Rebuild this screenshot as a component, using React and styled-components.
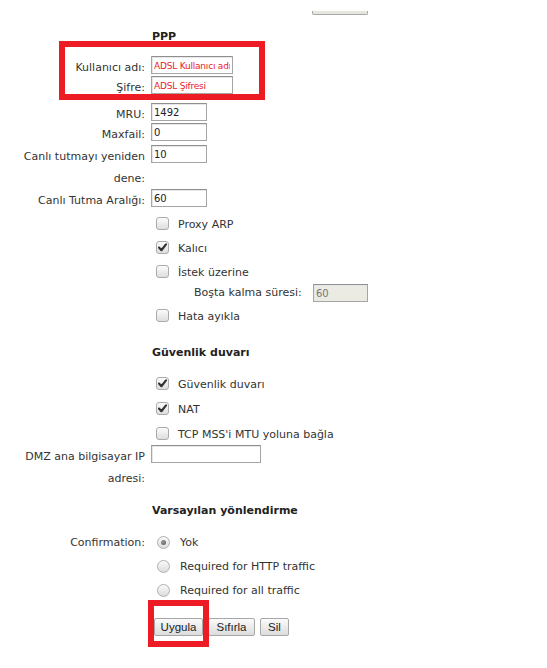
import React from "react";
import styled, { createGlobalStyle } from "styled-components";

const GlobalStyle = createGlobalStyle`
  body {
    margin: 0;
    font-family: "DejaVu Sans", Verdana, sans-serif;
    font-size: 11px;
    color: #333;
    background: #fff;
  }
`;

const Page = styled.div`
  position: relative;
  width: 547px;
  height: 668px;
  overflow: hidden;
  background: #fff;
`;

const TopButton = styled.div`
  margin: 11px 0 0 312px;
  width: 56px;
  height: 4px;
  box-sizing: border-box;
  background: #e6e6de;
  border: 1px solid #a8a8a8;
  border-top: none;
  border-radius: 0 0 2px 2px;
`;

const Heading = styled.div`
  margin: ${props => props.top}px 0 0 152px;
  font-weight: bold;
  line-height: 16px;
  color: #222;
`;

const Row = styled.div`
  display: grid;
  grid-template-columns: 145px auto;
  column-gap: 6px;
  align-items: start;
  height: ${props => (props.h ? `${props.h}px` : "auto")};
  margin-top: ${props => props.mt || 0}px;
`;

const Label = styled.div`
  text-align: right;
  line-height: ${props => props.lh || 22}px;
  padding-top: ${props => (props.lh ? 0 : 1)}px;
`;

const TextInput = styled.input`
  display: block;
  box-sizing: border-box;
  width: ${props => props.w}px;
  height: 18px;
  margin: ${props => props.mt || 0}px 0 0 ${props => props.ml || 0}px;
  padding: 0 2px;
  border: 1px solid #a5a5a5;
  border-top-color: #8f8f8f;
  box-shadow: inset 1px 1px 0 #e6e6e6;
  background: ${props => (props.disabled ? "#ebebe4" : "#fff")};
  font-family: "DejaVu Sans", Verdana, sans-serif;
  font-size: 10px;
  color: ${props => (props.disabled ? "#777" : "#222")};
  outline: none;

  &::placeholder {
    color: #e8202a;
    font-size: 9px;
    letter-spacing: -0.2px;
    opacity: 1;
  }
`;

const CheckRow = styled.div`
  display: flex;
  align-items: flex-start;
  height: ${props => props.h}px;
  margin-top: ${props => props.mt || 0}px;
  padding-left: 156px;
`;

const Box = styled.span`
  display: flex;
  align-items: center;
  justify-content: center;
  box-sizing: border-box;
  width: 13px;
  height: 13px;
  margin-top: 4px;
  border: 1px solid #ababab;
  border-radius: 3px;
  background: linear-gradient(#fbfbfb, #dedede);
`;

const OptionText = styled.span`
  margin-left: ${props => props.gap || 9}px;
  line-height: 24px;
`;

const SubRow = styled.div`
  display: flex;
  align-items: flex-start;
  height: ${props => props.h}px;
  padding-left: 194px;
`;

const SubLabel = styled.span`
  width: 119px;
  line-height: 20px;
`;

const RadioList = styled.div`
  display: flex;
  flex-direction: column;
  padding-left: 6px;
`;

const RadioRow = styled.div`
  display: flex;
  align-items: flex-start;
  height: 24px;
`;

const Radio = styled.span`
  display: flex;
  align-items: center;
  justify-content: center;
  box-sizing: border-box;
  width: 13px;
  height: 13px;
  margin-top: 5px;
  border: 1px solid #b0b0b0;
  border-radius: 50%;
  background: linear-gradient(#fafafa, #dcdcdc);

  &::after {
    content: "";
    display: ${props => (props.on ? "block" : "none")};
    width: 5px;
    height: 5px;
    border-radius: 50%;
    background: radial-gradient(circle at 40% 35%, #9a9a9a, #555);
  }
`;

const Buttons = styled.div`
  display: flex;
  gap: 5px;
  margin: 15px 0 0 154px;
`;

const Button = styled.button`
  box-sizing: border-box;
  width: ${props => props.w}px;
  height: 18px;
  padding: 0;
  border: 1px solid #a7a7a7;
  border-radius: 2px;
  background: linear-gradient(#fbfbfb, #dcdcdc);
  font-family: "Liberation Sans", Arial, sans-serif;
  font-size: 11.5px;
  color: #222;
`;

const Highlight = styled.div`
  position: absolute;
  left: ${props => props.x}px;
  top: ${props => props.y}px;
  width: ${props => props.w}px;
  height: ${props => props.h}px;
  box-sizing: border-box;
  border: 6px solid #ed1c24;
  pointer-events: none;
`;

const Check = () => (
  <svg width="9" height="9" viewBox="0 0 9 9">
    <path d="M1 4.6 L3.4 7.2 L8 1.4" fill="none" stroke="#333" strokeWidth="2.2" strokeLinecap="round" strokeLinejoin="round" />
  </svg>
);

const CheckOption = ({ h, mt, checked, children }) => (
  <CheckRow h={h} mt={mt}>
    <Box>{checked && <Check />}</Box>
    <OptionText>{children}</OptionText>
  </CheckRow>
);

const Field = ({ label, h, mt, w, value, placeholder }) => (
  <Row h={h} mt={mt}>
    <Label>{label}</Label>
    <TextInput w={w} defaultValue={value} placeholder={placeholder} />
  </Row>
);

export default function App() {
  return (
    <Page>
      <GlobalStyle />
      <TopButton />

      <Heading top={14}>PPP</Heading>
      <Field label="Kullanıcı adı:" h={20} mt={11} w={82} placeholder="ADSL Kullanıcı adı" />
      <Field label="Şifre:" h={27} w={82} placeholder="ADSL Şifresi" />
      <Field label="MRU:" h={20} w={56} value="1492" />
      <Field label="Maxfail:" h={22} w={56} value="0" />
      <Field label="Canlı tutmayı yeniden dene:" h={44} w={56} value="10" />
      <Field label="Canlı Tutma Aralığı:" h={24} w={56} value="60" />

      <CheckOption h={24}>Proxy ARP</CheckOption>
      <CheckOption h={24} checked>Kalıcı</CheckOption>
      <CheckOption h={22}>İstek üzerine</CheckOption>
      <SubRow h={22}>
        <SubLabel>Boşta kalma süresi:</SubLabel>
        <TextInput w={55} mt={1} defaultValue="60" disabled />
      </SubRow>
      <CheckOption h={24}>Hata ayıkla</CheckOption>

      <Heading top={16}>Güvenlik duvarı</Heading>
      <CheckOption h={25} mt={12} checked>Güvenlik duvarı</CheckOption>
      <CheckOption h={25} checked>NAT</CheckOption>
      <CheckOption h={22}>TCP MSS'i MTU yoluna bağla</CheckOption>
      <Field label="DMZ ana bilgisayar IP adresi:" h={44} w={110} />

      <Heading top={14}>Varsayılan yönlendirme</Heading>
      <Row mt={12}>
        <Label lh={24}>Confirmation:</Label>
        <RadioList>
          <RadioRow>
            <Radio on />
            <OptionText gap={10}>Yok</OptionText>
          </RadioRow>
          <RadioRow>
            <Radio />
            <OptionText gap={10}>Required for HTTP traffic</OptionText>
          </RadioRow>
          <RadioRow>
            <Radio />
            <OptionText gap={10}>Required for all traffic</OptionText>
          </RadioRow>
        </RadioList>
      </Row>

      <Buttons>
        <Button w={49}>Uygula</Button>
        <Button w={47}>Sıfırla</Button>
        <Button w={29}>Sil</Button>
      </Buttons>

      <Highlight x={59} y={41} w={206} h={59} />
      <Highlight x={148} y={600} w={61} h={47} />
    </Page>
  );
}
